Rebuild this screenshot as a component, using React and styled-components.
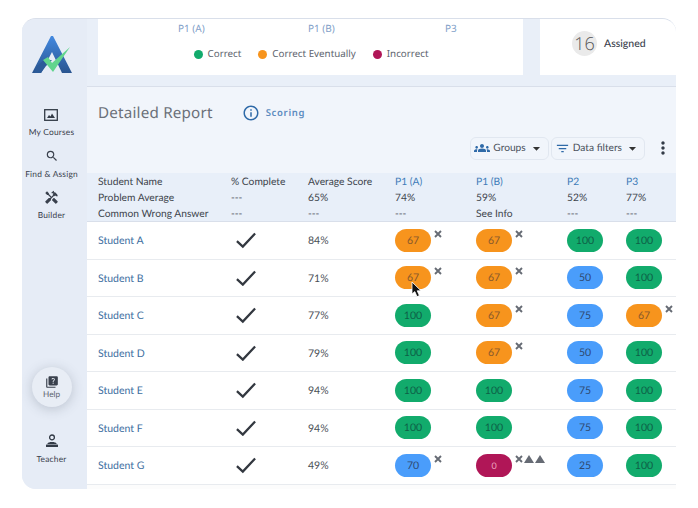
import React from "react";
import styled, { createGlobalStyle } from "styled-components";
import {
  MdArrowDropDown,
  MdFilterList,
  MdGroups,
  MdHandyman,
  MdInfoOutline,
  MdMoreVert,
  MdQuiz,
  MdSearch,
} from "react-icons/md";

const students = [
  { name: "Student A", avg: "84%", scores: [["67", "x"], ["67", "x"], ["100"], ["100"]] },
  { name: "Student B", avg: "71%", scores: [["67", "x"], ["67", "x"], ["50"], ["100"]] },
  { name: "Student C", avg: "77%", scores: [["100"], ["67", "x"], ["75"], ["67", "x"]] },
  { name: "Student D", avg: "79%", scores: [["100"], ["67", "x"], ["50"], ["100"]] },
  { name: "Student E", avg: "94%", scores: [["100"], ["100"], ["75"], ["100"]] },
  { name: "Student F", avg: "94%", scores: [["100"], ["100"], ["75"], ["100"]] },
  { name: "Student G", avg: "49%", scores: [["70", "x"], ["0", "xt"], ["25"], ["100"]] },
];

const kindOf = (value) => {
  if (value === "100") return "green";
  if (value === "67") return "orange";
  if (value === "0") return "red";
  return "blue";
};

const App = () => (
  <>
    <GlobalStyle />
    <Frame>
      <Sidebar>
        <Logo />
        <NavItem $height={40} $gap={6}>
          <CoursesIcon />
          <span>My Courses</span>
        </NavItem>
        <NavItem $height={40.5} $gap={6}>
          <MdSearch size={14} />
          <span>Find &amp; Assign</span>
        </NavItem>
        <NavItem $height={36} $gap={5.5}>
          <MdHandyman size={15} />
          <span>Builder</span>
        </NavItem>
        <Spacer />
        <HelpButton>
          <MdQuiz size={14} />
          <span>Help</span>
        </HelpButton>
        <NavItem $gap={6}>
          <TeacherIcon />
          <span>Teacher</span>
        </NavItem>
      </Sidebar>

      <Main>
        <TopStrip>
          <ChartCard>
            <AxisRow>
              <AxisLabel $width={130}>P1 (A)</AxisLabel>
              <AxisLabel $width={137}>P1 (B)</AxisLabel>
              <AxisLabel $width={40}>P3</AxisLabel>
            </AxisRow>
            <Legend>
              <LegendItem color="#12ab6c">Correct</LegendItem>
              <LegendItem color="#f7941d">Correct Eventually</LegendItem>
              <LegendItem color="#b01657">Incorrect</LegendItem>
            </Legend>
          </ChartCard>
          <AssignedCard>
            <CountBadge>16</CountBadge>
            <span>Assigned</span>
          </AssignedCard>
        </TopStrip>

        <Report>
          <TitleRow>
            <Title>Detailed Report</Title>
            <ScoringLink>
              <MdInfoOutline size={18} />
              <span>Scoring</span>
            </ScoringLink>
          </TitleRow>

          <Toolbar>
            <FilterButton>
              <MdGroups size={16} color="#2f6aa8" />
              <span>Groups</span>
              <MdArrowDropDown size={17} />
            </FilterButton>
            <FilterButton>
              <MdFilterList size={15} color="#2f6aa8" />
              <span>Data filters</span>
              <MdArrowDropDown size={17} />
            </FilterButton>
            <MoreButton>
              <MdMoreVert size={20} />
            </MoreButton>
          </Toolbar>

          <TableHead>
            <HeadCell>
              <div>Student Name</div>
              <div>Problem Average</div>
              <div>Common Wrong Answer</div>
            </HeadCell>
            <HeadCell>
              <div>% Complete</div>
              <div>---</div>
              <div>---</div>
            </HeadCell>
            <HeadCell>
              <div>Average Score</div>
              <div>65%</div>
              <div>---</div>
            </HeadCell>
            <HeadCell>
              <ProblemLabel>P1 (A)</ProblemLabel>
              <div>74%</div>
              <div>---</div>
            </HeadCell>
            <HeadCell>
              <ProblemLabel>P1 (B)</ProblemLabel>
              <div>59%</div>
              <div>See Info</div>
            </HeadCell>
            <HeadCell>
              <ProblemLabel>P2</ProblemLabel>
              <div>52%</div>
              <div>---</div>
            </HeadCell>
            <HeadCell>
              <ProblemLabel>P3</ProblemLabel>
              <div>77%</div>
              <div>---</div>
            </HeadCell>
          </TableHead>

          {students.map((student) => (
            <Row key={student.name}>
              <StudentName>{student.name}</StudentName>
              <CheckMark />
              <Average>{student.avg}</Average>
              {student.scores.map(([value, marks], i) => (
                <ScoreCell key={i}>
                  <Pill $kind={kindOf(value)}>{value}</Pill>
                  {marks && <CrossMark />}
                  {marks === "xt" && (
                    <Triangles>
                      <Triangle />
                      <Triangle />
                    </Triangles>
                  )}
                </ScoreCell>
              ))}
            </Row>
          ))}
          <TableTail />
          <Cursor />
        </Report>
      </Main>
    </Frame>
  </>
);

const Logo = () => (
  <LogoSvg viewBox="0 0 40 37" width="40" height="37">
    <defs>
      <linearGradient id="logoBlue" x1="0" y1="0" x2="0" y2="1">
        <stop offset="0" stopColor="#4389e0" />
        <stop offset="1" stopColor="#2a5590" />
      </linearGradient>
    </defs>
    <path d="M19 0 H21 L40 37 H30 L20 16 L9 37 H0 Z" fill="url(#logoBlue)" />
    <path d="M5 30 L12 24 H20 L14 30 L9 37 H2 Z" fill="#2c5b99" />
    <path d="M11 24 L16 21 L20 27 L38 11 L21 36 Z" fill="#62d58e" />
  </LogoSvg>
);

const CoursesIcon = () => (
  <svg viewBox="0 0 14 12" width="14" height="12">
    <rect x="0.7" y="0.7" width="12.6" height="10.6" fill="none" stroke="#333b47" strokeWidth="1.3" />
    <path d="M3 9 L5 6 L6.5 7.5 L8 4.5 L11 9 Z" fill="#333b47" />
  </svg>
);

const TeacherIcon = () => (
  <svg viewBox="0 0 14 14" width="14" height="14" fill="#333b47">
    <circle cx="7" cy="3.4" r="2.4" fill="none" stroke="#333b47" strokeWidth="1.3" />
    <path d="M2.5 9.5 C3 7.5 11 7.5 11.5 9.5 V10 H2.5 Z" />
    <rect x="1" y="10.6" width="12" height="2.4" rx="0.5" />
  </svg>
);

const CheckMark = () => (
  <CheckWrap>
    <svg viewBox="0 0 22 18" width="20" height="16.5">
      <path d="M1 10 L7.5 16 L21 1.5" fill="none" stroke="#333840" strokeWidth="2.5" />
    </svg>
  </CheckWrap>
);

const CrossMark = () => (
  <MarkSvg viewBox="0 0 8 8" width="8" height="8">
    <path d="M1 1 L7 7 M7 1 L1 7" stroke="#666b74" strokeWidth="1.9" />
  </MarkSvg>
);

const Triangle = () => (
  <MarkSvg viewBox="0 0 10 8" width="10" height="8">
    <path d="M5 0 L10 8 H0 Z" fill="#666b74" />
  </MarkSvg>
);

const Cursor = () => (
  <CursorSvg viewBox="0 0 11 17" width="11" height="17">
    <path d="M1 1 V13 L3.8 10.6 L6 15.6 L8.4 14.6 L6.2 9.8 H10 Z" fill="#111" stroke="#fff" strokeWidth="0.8" />
  </CursorSvg>
);

const GlobalStyle = createGlobalStyle`
  html, body {
    margin: 0;
    background: #fff;
    font-family: "Lato", "Open Sans", sans-serif;
    text-rendering: geometricPrecision;
  }
`;

const Frame = styled.div`
  display: flex;
  width: 654px;
  height: 471px;
  margin: 18px 0 0 22px;
  overflow: hidden;
  background: #e9eff8;
  border-radius: 14px 14px 0 14px;
  border-top: 1px solid #d9dfea;
  box-sizing: border-box;
`;

const Sidebar = styled.div`
  display: flex;
  flex-direction: column;
  align-items: center;
  flex: 0 0 65px;
  padding: 0 6px 25px 0;
  box-sizing: border-box;
  background: #e6ecf6;
`;

const LogoSvg = styled.svg`
  flex: none;
  margin: 17px 0 36px;
`;

const NavItem = styled.div`
  display: flex;
  flex-direction: column;
  align-items: center;
  flex: none;
  height: ${(p) => (p.$height ? `${p.$height}px` : "auto")};
  gap: ${(p) => p.$gap}px;
  color: #3a414d;
  font-size: 8.4px;
  line-height: 10px;
  letter-spacing: 0.2px;
  white-space: nowrap;
`;

const Spacer = styled.div`
  flex: 1;
`;

const HelpButton = styled.div`
  display: flex;
  flex-direction: column;
  align-items: center;
  justify-content: center;
  flex: none;
  width: 40px;
  height: 40px;
  margin-bottom: 27px;
  border-radius: 50%;
  background: #e8edf5;
  box-shadow: 0 2px 12px rgba(60, 70, 90, 0.25);
  color: #5b626e;
  font-size: 8.2px;

  svg {
    color: #3a414d;
  }
`;

const Main = styled.div`
  display: flex;
  flex-direction: column;
  flex: 1;
  min-width: 0;
`;

const TopStrip = styled.div`
  display: flex;
  flex: 0 0 68px;
  padding: 0 0 11px 11px;
  gap: 17px;
  box-sizing: border-box;
  border-bottom: 1px solid #d9dfea;
`;

const ChartCard = styled.div`
  display: flex;
  flex-direction: column;
  align-items: center;
  flex: none;
  width: 425px;
  padding-top: 2px;
  box-sizing: border-box;
  background: #fff;
`;

const AxisRow = styled.div`
  display: flex;
  width: 100%;
  height: 25px;
  padding-left: 80px;
  box-sizing: border-box;
`;

const AxisLabel = styled.div`
  flex: 0 0 ${(p) => p.$width}px;
  color: #7fa0c8;
  font-family: "Noto Sans", sans-serif;
  font-size: 10px;
  line-height: 14px;
`;

const Legend = styled.div`
  display: flex;
  gap: 17px;
  margin-left: 1px;
`;

const LegendItem = styled.div`
  display: flex;
  align-items: center;
  gap: 5px;
  color: #5e646e;
  font-family: "Noto Sans", sans-serif;
  font-size: 9.8px;
  line-height: 16px;

  &::before {
    content: "";
    width: 9px;
    height: 9px;
    border-radius: 50%;
    background: ${(p) => p.color};
  }
`;

const AssignedCard = styled.div`
  display: flex;
  align-items: center;
  flex: 1;
  padding: 0 0 7px 32px;
  gap: 7px;
  background: #fff;
  color: #3a414d;
  font-size: 10.5px;
  font-weight: 500;
`;

const CountBadge = styled.div`
  display: flex;
  align-items: center;
  justify-content: center;
  width: 25px;
  height: 25px;
  border-radius: 50%;
  background: #eaeaea;
  color: #555;
  font-family: "Open Sans", sans-serif;
  font-size: 18px;
  font-weight: 300;
`;

const Report = styled.div`
  position: relative;
  display: flex;
  flex-direction: column;
  flex: 1;
  min-height: 0;
  background: #f1f5fb;
`;

const TitleRow = styled.div`
  display: flex;
  align-items: center;
  flex: none;
  height: 50px;
  padding: 1px 0 0 11px;
  gap: 29px;
  box-sizing: border-box;
`;

const Title = styled.div`
  color: #6b7079;
  font-family: "Noto Sans", sans-serif;
  font-size: 15.2px;
  letter-spacing: 0.2px;
`;

const ScoringLink = styled.div`
  display: flex;
  align-items: center;
  gap: 6px;
  color: #2f6aa8;
  font-family: "Noto Sans", sans-serif;
  font-size: 9.5px;
  font-weight: 600;
  letter-spacing: 0.7px;

  span {
    color: #5d8cc0;
  }
`;

const Toolbar = styled.div`
  display: flex;
  justify-content: flex-end;
  align-items: center;
  flex: none;
  height: 36px;
  padding: 0 3px 14px 0;
  gap: 2px;
  box-sizing: border-box;
`;

const FilterButton = styled.div`
  display: flex;
  align-items: center;
  height: 23px;
  padding: 0 3px;
  gap: 3px;
  border: 1px solid #e1e7f0;
  border-radius: 6px;
  box-sizing: border-box;
  color: #4a515c;
  font-size: 10.2px;

  svg:last-child {
    margin-left: -1px;
    color: #333;
  }
`;

const MoreButton = styled.div`
  display: flex;
  margin-left: 6px;
  color: #333b47;
`;

const tableColumns = "133px 77px 87px 81px 91px 59px 1fr";

const TableHead = styled.div`
  display: grid;
  grid-template-columns: ${tableColumns};
  flex: none;
  height: 49px;
  padding: 1px 0 0 11px;
  align-items: center;
  background: #e8eff9;
  border-bottom: 1px solid #d9dfea;
  box-sizing: border-box;
`;

const HeadCell = styled.div`
  color: #40454d;
  font-size: 10.25px;
  line-height: 16.2px;
  white-space: nowrap;
`;

const ProblemLabel = styled.div`
  color: #3f7cb8;
`;

const Row = styled.div`
  display: grid;
  grid-template-columns: ${tableColumns};
  flex: none;
  height: 37.5px;
  padding-left: 11px;
  align-items: center;
  background: #fff;
  border-bottom: 1px solid #e8ebef;
  box-sizing: border-box;
`;

const TableTail = styled.div`
  flex: 1;
  background: #fcfcfc;
`;

const StudentName = styled.div`
  padding-top: 2px;
  color: #3e6f9f;
  font-size: 10.5px;
`;

const CheckWrap = styled.div`
  display: flex;
  padding-left: 5px;
`;

const Average = styled.div`
  padding-top: 2px;
  color: #4a4f56;
  font-size: 10.5px;
`;

const ScoreCell = styled.div`
  display: flex;
  align-items: flex-start;
  gap: 3px;
`;

const pillColors = {
  green: ["#12ab6c", "#0e5f47"],
  orange: ["#f7941d", "#8a5a2c"],
  blue: ["#4a9dfb", "#2f4a72"],
  red: ["#b01657", "#eda3bf"],
};

const Pill = styled.div`
  display: flex;
  align-items: center;
  justify-content: center;
  width: 36px;
  height: 23px;
  padding-top: 1px;
  border-radius: 12px;
  box-sizing: border-box;
  background: ${(p) => pillColors[p.$kind][0]};
  color: ${(p) => pillColors[p.$kind][1]};
  font-size: ${(p) => (p.$kind === "red" ? "9px" : "10.5px")};
`;

const MarkSvg = styled.svg`
  margin-top: 1px;
`;

const Triangles = styled.div`
  display: flex;
  gap: 1px;
  margin-left: -2px;
`;

const CursorSvg = styled.svg`
  position: absolute;
  left: 324px;
  top: 194px;
`;

export default App;
